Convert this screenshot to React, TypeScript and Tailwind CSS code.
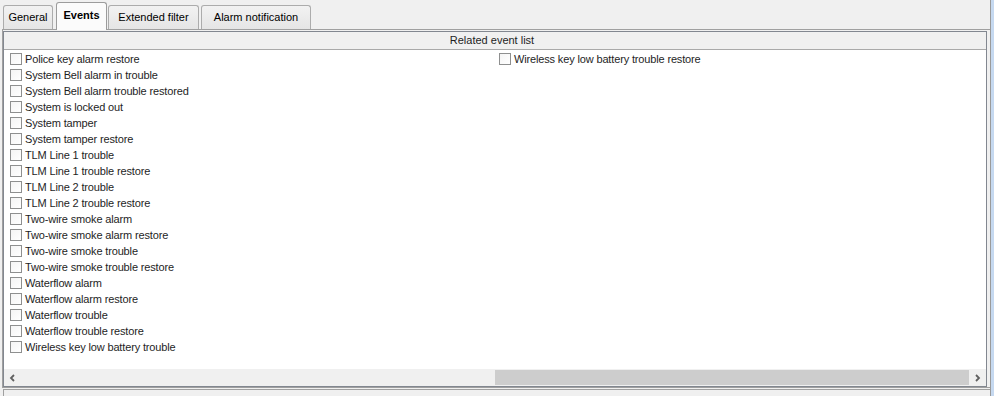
import React from "react";

const left = [
  "Police key alarm restore",
  "System Bell alarm in trouble",
  "System Bell alarm trouble restored",
  "System is locked out",
  "System tamper",
  "System tamper restore",
  "TLM Line 1 trouble",
  "TLM Line 1 trouble restore",
  "TLM Line 2 trouble",
  "TLM Line 2 trouble restore",
  "Two-wire smoke alarm",
  "Two-wire smoke alarm restore",
  "Two-wire smoke trouble",
  "Two-wire smoke trouble restore",
  "Waterflow alarm",
  "Waterflow alarm restore",
  "Waterflow trouble",
  "Waterflow trouble restore",
  "Wireless key low battery trouble",
];

const right = ["Wireless key low battery trouble restore"];

function Check({ label }: { label: string }) {
  return (
    <div className="flex h-[16px] items-center gap-[3px]">
      <span className="h-[12px] w-[12px] shrink-0 border border-[#8e8f8f] bg-gradient-to-br from-[#f4f4f4] to-white" />
      <span className="whitespace-nowrap leading-none tracking-[-0.15px]">{label}</span>
    </div>
  );
}

function Tab({ label, w }: { label: string; w: string }) {
  return (
    <div
      className={`flex h-[24px] items-center justify-center rounded-t-[3px] border border-b-0 border-[#acacac] bg-gradient-to-b from-[#f2f2f2] to-[#e5e5e5] pb-[1px] text-black ${w}`}
    >
      {label}
    </div>
  );
}

export default function App() {
  return (
    <div
      className="relative flex h-[396px] w-[994px] overflow-hidden bg-[#f0f0f0] text-[11px] text-[#1e1e1e]"
      style={{ fontFamily: "Tahoma, 'Liberation Sans', Arial, sans-serif" }}
    >
      <div className="flex min-w-0 flex-1 flex-col">
        {/* tabs */}
        <div className="flex h-[29px] shrink-0 items-end pl-[3px]">
          <Tab label="General" w="w-[50px]" />
          <div className="relative z-10 -mb-px ml-[3px] flex h-[28px] w-[51px] items-center justify-center rounded-t-[3px] border border-b-0 border-[#9c9c9c] bg-[#fbfbfb] pb-[2px] font-bold text-black">
            Events
          </div>
          <div className="ml-[1px]">
            <Tab label="Extended filter" w="w-[91px]" />
          </div>
          <div className="ml-[2px]">
            <Tab label="Alarm notification" w="w-[110px]" />
          </div>
        </div>

        {/* pane */}
        <div className="ml-[2px] flex h-[359px] flex-col border border-r-0 border-[#a0a0a0] bg-[#f0f0f0] pr-[3px] pt-[1px]">
          <div className="flex flex-1 flex-col border border-[#828790] bg-white">
            <div className="flex h-[18px] shrink-0 items-center justify-center border-b border-[#a9a9a9] bg-[#f0f0f0] pr-[6px]">
              Related event list
            </div>
            <div className="flex flex-1 pt-[1px]">
              <div className="flex w-[489px] flex-col pl-[6px]">
                {left.map((l) => (
                  <Check key={l} label={l} />
                ))}
              </div>
              <div className="flex flex-col pl-[6px]">
                {right.map((l) => (
                  <Check key={l} label={l} />
                ))}
              </div>
            </div>
            <div className="flex h-[17px] shrink-0 items-center bg-[#f0f0f0]">
              <div className="flex w-[17px] items-center justify-center">
                <svg width="7" height="8" viewBox="0 0 7 8">
                  <path d="M5 1 L2 4 L5 7" fill="none" stroke="#606060" strokeWidth="1.8" />
                </svg>
              </div>
              <div className="flex-1" />
              <div className="h-[15px] w-[474px] bg-[#cdcdcd]" />
              <div className="flex w-[17px] items-center justify-center">
                <svg width="7" height="8" viewBox="0 0 7 8">
                  <path d="M2 1 L5 4 L2 7" fill="none" stroke="#606060" strokeWidth="1.8" />
                </svg>
              </div>
            </div>
          </div>
        </div>
        <div className="ml-[3px] mt-[1px] flex-1 border-l border-t border-[#a0a0a0]" />
      </div>
      <div className="flex w-[4px] shrink-0">
        <div className="w-px bg-[#9a9a9a]" />
        <div className="flex-1 bg-[#c6d9f0]" />
      </div>
    </div>
  );
}
